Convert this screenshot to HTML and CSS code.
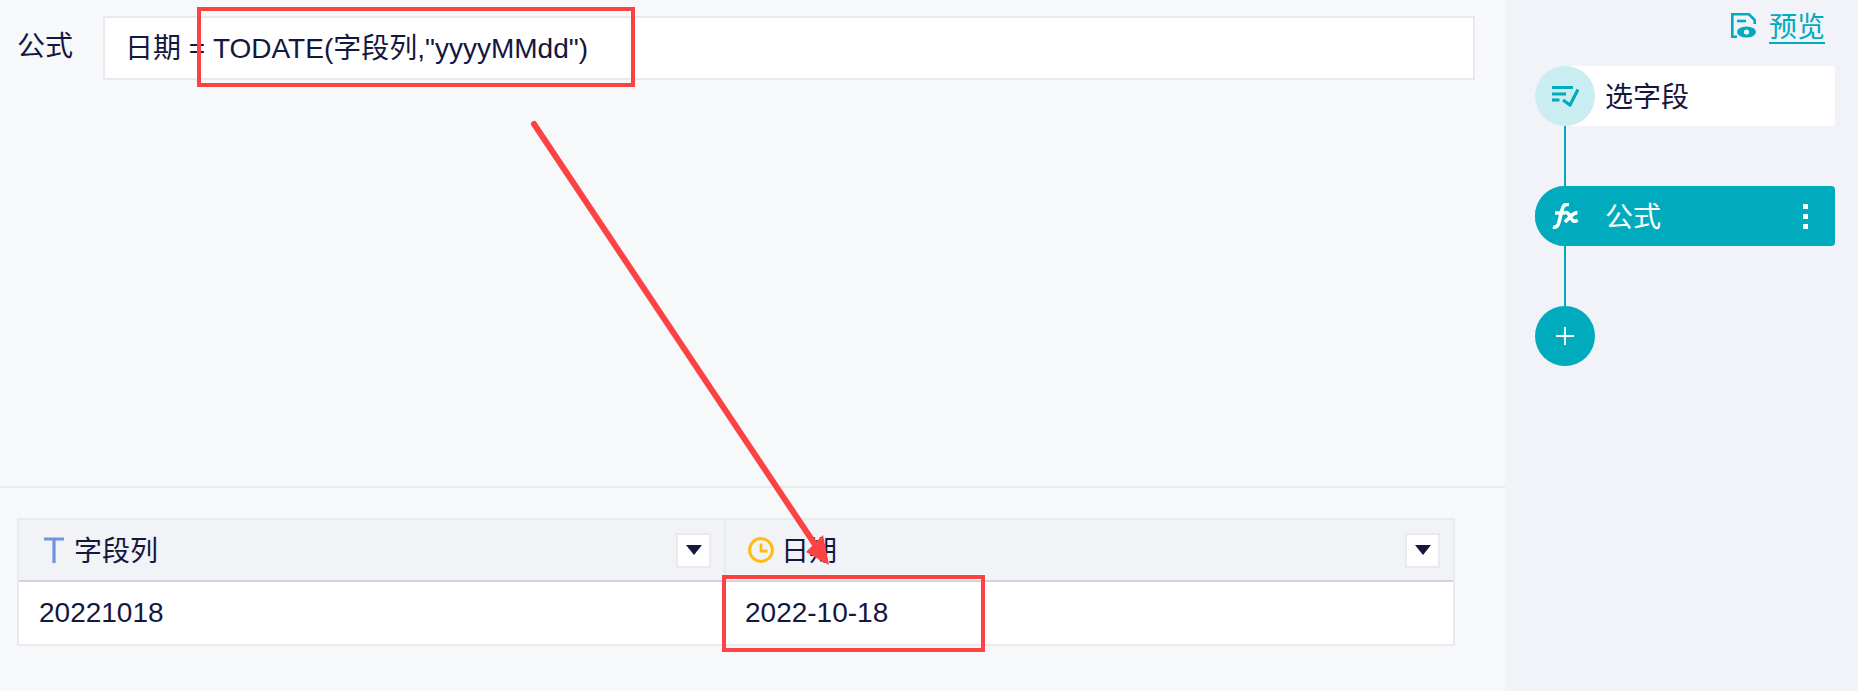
FILE: index.html
```html
<!DOCTYPE html>
<html lang="en">
<head>
    <meta charset="UTF-8">
    <title>公式</title>
    <link rel="stylesheet" href="styles.css">
</head>
<body>
    <div class="page">
        <div class="main">
            <div class="editor">
                <span class="formula-label">公式</span>
                <div class="formula-box">日期 = TODATE(字段列,"yyyyMMdd")</div>
            </div>
            <div class="result">
                <div class="table">
                    <div class="cell head">
                        <svg class="type-icon" width="22" height="26" viewBox="0 0 22 26"><path d="M1 2h20M11 2v24" fill="none" stroke="#6f94e0" stroke-width="3.200"/></svg>
                        <span class="head-text">字段列</span>
                        <span class="drop"><i class="drop-arrow"></i></span>
                    </div>
                    <div class="cell head head-date">
                        <svg class="type-icon" width="26" height="26" viewBox="0 0 26 26"><circle cx="13" cy="13" r="11.400" fill="none" stroke="#fdbc0f" stroke-width="3"/><path d="M13 6.500v7.500h6.500" fill="none" stroke="#fdbc0f" stroke-width="2.800"/></svg>
                        <span class="head-text">日期</span>
                        <span class="drop"><i class="drop-arrow"></i></span>
                    </div>
                    <div class="cell">20221018</div>
                    <div class="cell cell-date">2022-10-18</div>
                </div>
            </div>
        </div>
        <div class="side">
            <div class="side-top">
                <svg width="25" height="25" viewBox="0 0 25 25"><path d="M6 23.700H1.300V1.300H18L23.700 7v4" fill="none" stroke="#01abbe" stroke-width="2.600"/><path d="M6 8h9" stroke="#01abbe" stroke-width="2.600"/><ellipse cx="15.500" cy="19" rx="9.500" ry="5.600" fill="#01abbe"/><circle cx="15.500" cy="19" r="2.600" fill="#f2f3f8"/></svg>
                <a class="preview" href="#">预览</a>
            </div>
            <div class="step">
                <span class="step-dot light">
                    <svg width="27" height="21" viewBox="0 0 27 21"><path d="M0 1.500h21M0 8h14M0 14h7.500" fill="none" stroke="#01abbe" stroke-width="3"/><path d="M11 14l7 5L26 3.500" fill="none" stroke="#01abbe" stroke-width="3.200"/></svg>
                </span>
                <span class="step-text">选字段</span>
            </div>
            <div class="link"></div>
            <div class="step active">
                <span class="step-dot">
                    <svg width="27" height="26" viewBox="0 0 27 26"><path d="M17 1.500C12 1 11 3 10 7L7 19C6 23 4 25 1 24M3 10h10" fill="none" stroke="#fff" stroke-width="3.600"/><path d="M13 9.500c4-.5 4 2.500 6 5.500 2 4 4 4 6.500 2M25.500 9.500C21 10 19 13 17 15l-4 4" fill="none" stroke="#fff" stroke-width="3.600"/></svg>
                </span>
                <span class="step-text">公式</span>
                <span class="step-more"><i></i><i></i><i></i></span>
            </div>
            <div class="link"></div>
            <div class="add-dot">
                <svg width="18" height="18" viewBox="0 0 18 18"><path d="M9 0v18M0 9h18" stroke="#fff" stroke-width="1.800"/></svg>
            </div>
        </div>
    </div>

    <i class="mark mark-formula"></i>
    <i class="mark mark-date"></i>
    <svg class="arrow" width="1858" height="691" viewBox="0 0 1858 691">
        <path d="M534 124L820 552" fill="none" stroke="#fb4344" stroke-width="6" stroke-linecap="round"/>
        <path d="M829 565L806 552L823 535z" fill="#fb4344"/>
    </svg>
</body>
</html>
```

FILE: styles.css
```css
html, body {
    margin: 0;
    padding: 0;
}
body {
    font-family: "Liberation Sans", "Noto Sans CJK SC", sans-serif;
    font-size: 28px;
    color: #14173f;
    width: 1858px;
    height: 691px;
    overflow: hidden;
    position: relative;
}
.page {
    display: flex;
    height: 691px;
}
.main {
    width: 1505px;
    display: flex;
    flex-direction: column;
    background: #f7f8fa;
}
.editor {
    box-sizing: border-box;
    padding: 16px 30px 0 17px;
    display: flex;
    align-items: flex-start;
    border-bottom: 2px solid #e9eaee;
    height: 488px;
}
.formula-label {
    width: 86px;
    line-height: 62px;
    flex-shrink: 0;
}
.formula-box {
    flex: 1;
    height: 64px;
    box-sizing: border-box;
    line-height: 61px;
    padding-left: 20px;
    background: #fff;
    border: 2px solid #e8e9ee;
}
.result {
    padding: 30px 0 0 17px;
}
.table {
    width: 1438px;
    box-sizing: border-box;
    display: grid;
    grid-template-columns: 707px 1fr;
    grid-template-rows: 62px 62px;
    border: 2px solid #e9eaee;
    background: #fff;
}
.cell {
    display: flex;
    align-items: center;
    padding-left: 20px;
}
.cell-date {
    padding-left: 19px;
}
.head {
    background: #f2f3f7;
    border-bottom: 2px solid #d2d3dc;
    padding-left: 24px;
    padding-right: 13px;
    gap: 9px;
}
.head:first-child {
    border-right: 2px solid #e9eaee;
}
.head-date {
    padding-left: 22px;
    gap: 7px;
}
.head-text {
    flex: 1;
    padding-bottom: 3px;
}
.drop {
    width: 35px;
    height: 35px;
    box-sizing: border-box;
    background: #fff;
    border: 2px solid #e9eaee;
    display: flex;
    align-items: center;
    justify-content: center;
}
.drop-arrow {
    width: 0;
    height: 0;
    border-left: 8px solid transparent;
    border-right: 8px solid transparent;
    border-top: 10px solid #14173f;
}
.side {
    flex: 1;
    background: #f2f3f8;
    padding: 0 23px 0 30px;
}
.side-top {
    height: 66px;
    box-sizing: border-box;
    padding: 13px 10px 0 0;
    display: flex;
    justify-content: flex-end;
    gap: 13px;
}
.preview {
    color: #01abbe;
    line-height: 29px;
    height: 29px;
    border-bottom: 2px solid #01abbe;
    text-decoration: none;
}
.step {
    height: 60px;
    display: flex;
    align-items: center;
    background: #fff;
    border-radius: 30px 4px 4px 30px;
}
.step.active {
    background: #01abbe;
    color: #fff;
}
.step-dot {
    width: 60px;
    height: 60px;
    border-radius: 50%;
    background: #01abbe;
    display: flex;
    align-items: center;
    justify-content: center;
    flex-shrink: 0;
}
.step-dot.light {
    background: #c9edf1;
}
.step-text {
    flex: 1;
    padding: 0 0 2px 10px;
}
.step-more {
    display: flex;
    flex-direction: column;
    gap: 5px;
    padding-right: 27px;
}
.step-more i {
    width: 5px;
    height: 5px;
    background: #fff;
}
.link {
    width: 2px;
    height: 60px;
    margin-left: 29px;
    background: #01abbe;
}
.add-dot {
    width: 60px;
    height: 60px;
    border-radius: 50%;
    background: #01abbe;
    display: flex;
    align-items: center;
    justify-content: center;
}
/* red annotations drawn over the screenshot */
.mark {
    position: absolute;
    box-sizing: border-box;
    border: 4px solid #fb4344;
}
.mark-formula {
    left: 197px;
    top: 7px;
    width: 438px;
    height: 80px;
}
.mark-date {
    left: 722px;
    top: 575px;
    width: 263px;
    height: 77px;
}
.arrow {
    position: absolute;
    left: 0;
    top: 0;
    pointer-events: none;
}
```
